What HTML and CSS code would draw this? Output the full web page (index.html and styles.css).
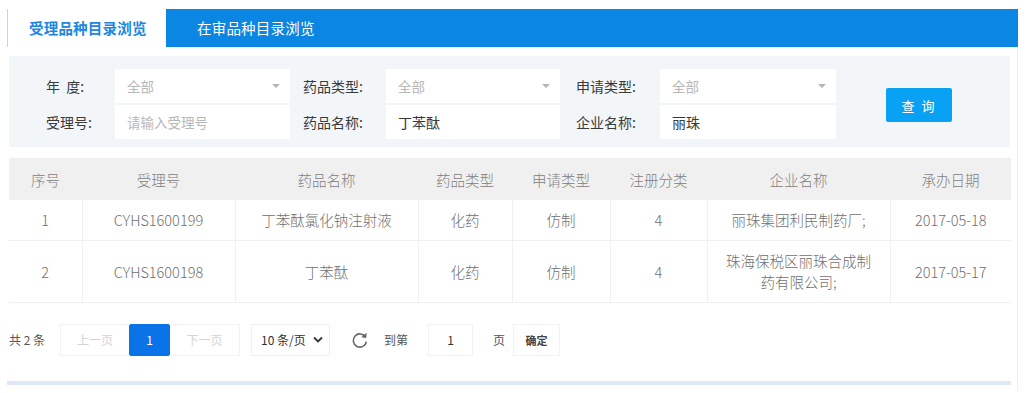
FILE: index.html
```html
<!DOCTYPE html>
<html>

	<head>
		<meta charset="UTF-8">
		<title>受理品种目录浏览</title>
		<link rel="stylesheet" href="styles.css">
	</head>

	<body>
		<div class="page">
			<!--标签页-->
			<div class="tabs">
				<div class="tab active">受理品种目录浏览</div>
				<div class="tab">在审品种目录浏览</div>
			</div>

			<div class="content">
				<!--查询条件-->
				<div class="filter">
					<label class="lbl">年&nbsp;&nbsp;度:</label>
					<div class="sel ph">全部<i class="arrow"></i></div>
					<label class="lbl">药品类型:</label>
					<div class="sel ph">全部<i class="arrow"></i></div>
					<label class="lbl">申请类型:</label>
					<div class="sel ph">全部<i class="arrow"></i></div>
					<button class="btn-query">查 询</button>

					<label class="lbl">受理号:</label>
					<div class="sel ph">请输入受理号</div>
					<label class="lbl">药品名称:</label>
					<div class="sel">丁苯酞</div>
					<label class="lbl">企业名称:</label>
					<div class="sel">丽珠</div>
				</div>

				<!--列表-->
				<table class="list">
					<colgroup>
						<col style="width:73px">
						<col style="width:153px">
						<col style="width:183px">
						<col style="width:94px">
						<col style="width:98px">
						<col style="width:97px">
						<col style="width:183px">
						<col>
					</colgroup>
					<thead>
						<tr>
							<th>序号</th>
							<th>受理号</th>
							<th>药品名称</th>
							<th>药品类型</th>
							<th>申请类型</th>
							<th>注册分类</th>
							<th>企业名称</th>
							<th>承办日期</th>
						</tr>
					</thead>
					<tbody>
						<tr class="r1">
							<td>1</td>
							<td>CYHS1600199</td>
							<td>丁苯酞氯化钠注射液</td>
							<td>化药</td>
							<td>仿制</td>
							<td>4</td>
							<td>丽珠集团利民制药厂;</td>
							<td>2017-05-18</td>
						</tr>
						<tr class="r2">
							<td>2</td>
							<td>CYHS1600198</td>
							<td>丁苯酞</td>
							<td>化药</td>
							<td>仿制</td>
							<td>4</td>
							<td>珠海保税区丽珠合成制药有限公司;</td>
							<td>2017-05-17</td>
						</tr>
					</tbody>
				</table>

				<!--分页-->
				<div class="pager">
					<span class="total">共 2 条</span>
					<div class="pages">
						<span class="pg prev">上一页</span>
						<span class="pg cur">1</span>
						<span class="pg next">下一页</span>
					</div>
					<div class="size">10 条/页
						<svg width="10" height="7" viewBox="0 0 10 7"><path d="M1 1.5 5 5.5 9 1.5" fill="none" stroke="#333" stroke-width="1.8"/></svg>
					</div>
					<svg class="refresh" width="18" height="18" viewBox="0 0 18 18">
						<path d="M14.6 6.2A6.6 6.6 0 1 0 15.4 10.6" fill="none" stroke="#666" stroke-width="1.6"/>
						<path d="M15.6 1.8 15.2 7 10.4 6.2z" fill="#666"/>
					</svg>
					<span class="txt">到第</span>
					<span class="jump">1</span>
					<span class="txt">页</span>
					<span class="ok">确定</span>
				</div>

				<div class="foot-line"></div>
			</div>
		</div>
	</body>

</html>
```

FILE: styles.css
```css
* {
	margin: 0;
	padding: 0;
	box-sizing: border-box;
}

body {
	background: #fff;
	font-family: "Noto Sans CJK SC", "Open Sans", sans-serif;
	color: #666;
}

.page {
	width: 1011px;
	margin: 9px 0 0 7px;
}

.tabs {
	display: flex;
	height: 38px;
}

.tab {
	flex: 1;
	background: #0b86e2;
	color: #fff;
	font-size: 14.5px;
	line-height: 38px;
	padding-left: 31px;
	letter-spacing: 0.2px;
}

.tab.active {
	flex: none;
	width: 159px;
	background: #fff;
	color: #2086e0;
	font-weight: bold;
	padding-left: 21px;
	border-left: 1px solid #b8d8f3;
}

.content {
	padding: 9px 6px 6px 2px;
	border-right: 1px solid #eef1f4;
}

.filter {
	display: grid;
	grid-template-columns: 69px 175px 96px 174px 100px 176px auto;
	grid-template-rows: 34px 34px;
	row-gap: 2px;
	align-items: center;
	background: #f3f6f9;
	padding: 13px 0 8px 37px;
	width: 1001px;
}

.lbl {
	font-size: 14px;
	color: #3a3a3a;
}

.filter .lbl:nth-child(3),
.filter .lbl:nth-child(10) {
	padding-left: 13px;
}

.filter .lbl:nth-child(5),
.filter .lbl:nth-child(12) {
	padding-left: 16px;
}

.sel {
	position: relative;
	height: 34px;
	line-height: 34px;
	background: #fff;
	padding-left: 12px;
	font-size: 14px;
	color: #3a3a3a;
}

.sel.ph {
	color: #b8b8b8;
	font-size: 13.5px;
}

.arrow {
	position: absolute;
	right: 10px;
	top: 15px;
	border-left: 4px solid transparent;
	border-right: 4px solid transparent;
	border-top: 4px solid #b4b4b4;
}

.btn-query {
	grid-column: 7;
	grid-row: 1 / 3;
	width: 66px;
	height: 34px;
	margin-left: 50px;
	margin-top: 2px;
	border: none;
	border-radius: 2px;
	background: #08a1f4;
	color: #fff;
	font-family: inherit;
	font-size: 13px;
	letter-spacing: 2px;
}

.list {
	margin-top: 11px;
	width: 1002px;
	border-collapse: collapse;
	table-layout: fixed;
	font-size: 14.5px;
	font-weight: 300;
}

.list th {
	height: 42px;
	background: #f0f0f0;
	font-weight: 300;
	color: #808080;
}

.list td {
	text-align: center;
	border: 1px solid #f0f0f0;
	border-top: none;
	color: #707070;
	padding: 0 14px;
	line-height: 21px;
}

.list td:first-child {
	border-left: none;
}

.list td:last-child {
	border-right: none;
}

.list .r1 td {
	height: 40px;
}

.list .r2 td {
	height: 62px;
}

.pager {
	display: flex;
	align-items: center;
	height: 32px;
	margin-top: 21px;
	font-size: 12px;
	color: #555;
}

.total {
	width: 51px;
}

.pages {
	display: flex;
}

.pg {
	height: 32px;
	line-height: 30px;
	border: 1px solid #f2f2f2;
	text-align: center;
	color: #d4d4d4;
}

.pg.prev {
	width: 69px;
	border-right: none;
}

.pg.cur {
	width: 41px;
	background: #0a73e8;
	border-color: #0a73e8;
	border-radius: 2px;
	color: #fff;
}

.pg.next {
	width: 70px;
	border-left: none;
}

.size {
	display: flex;
	align-items: center;
	gap: 7px;
	margin-left: 11px;
	width: 79px;
	height: 32px;
	padding-left: 9px;
	border: 1px solid #f0f0f0;
	color: #333;
}

.refresh {
	margin-left: 21px;
}

.txt {
	margin-left: 15px;
}

.jump {
	width: 45px;
	height: 32px;
	line-height: 30px;
	margin-left: 20px;
	border: 1px solid #f2f2f2;
	text-align: center;
	color: #333;
}

.jump + .txt {
	margin-left: 20px;
}

.ok {
	width: 47px;
	height: 32px;
	line-height: 30px;
	margin-left: 8px;
	border: 1px solid #f2f2f2;
	text-align: center;
	font-size: 11px;
	font-weight: bold;
	color: #444;
}

.foot-line {
	margin: 25px 0 0 -2px;
	height: 4px;
	background: #dde9f5;
}
```
